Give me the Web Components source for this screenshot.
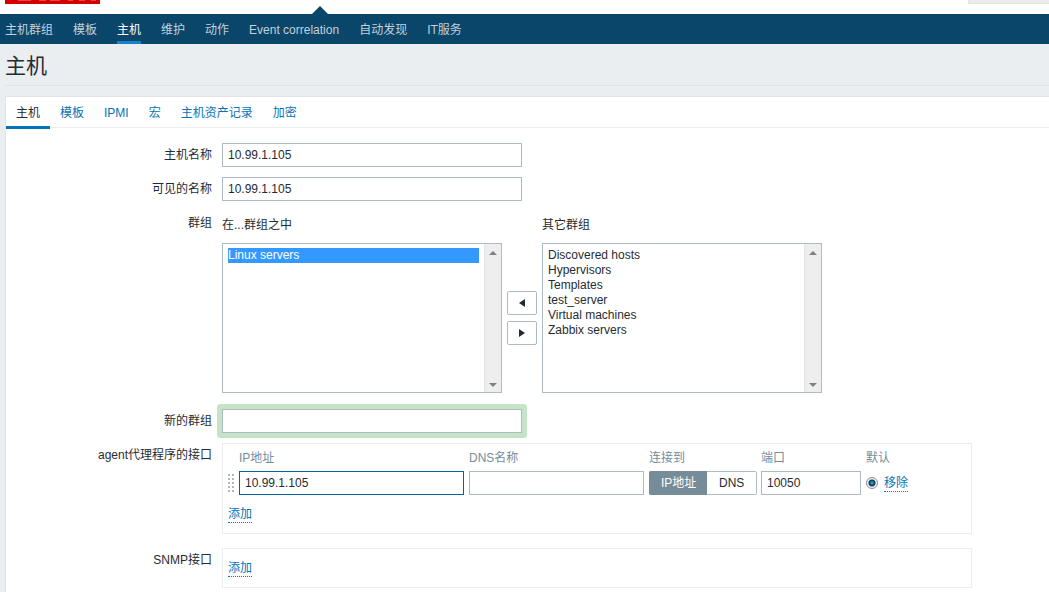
<!DOCTYPE html>
<html lang="zh-CN">
<head>
<meta charset="utf-8">
<title>主机</title>
<style>
  html { background: #ebeef0; }
  body {
    margin: 0;
    font: 12px/16px "Liberation Sans", "Noto Sans CJK SC", Arial, sans-serif;
    color: #1f2c33;
  }
</style>
</head>
<body>
<zbx-app></zbx-app>

<script>
const define = (name, html, setup) => {
  const tpl = document.createElement('template');
  tpl.innerHTML = html;
  customElements.define(name, class extends HTMLElement {
    /* Lets a <label for> outside the shadow root point at the element. */
    static formAssociated = true;
    constructor() {
      super();
      const delegatesFocus = name === 'zbx-textbox';
      this.attachShadow({ mode: 'open', delegatesFocus }).append(tpl.content.cloneNode(true));
    }
    connectedCallback() { if (setup) setup(this, this.shadowRoot); }
  });
};

define('zbx-topbar', `
  <style>
    :host { display: flex; justify-content: space-between; height: 14px; padding-left: 5px; background: #fff; position: relative; }
    .logo { display: block; width: 95px; height: 4px; }
    .search { width: 80px; height: 3px; background: #ebebeb; border: solid #dfe4e7; border-width: 0 0 1px 1px; }
    .pointer { position: absolute; left: 312px; bottom: 0; width: 16px; height: 8px; }
  </style>
  <svg class="logo" viewBox="0 0 95 4" aria-hidden="true">
    <rect width="95" height="4" fill="#d40000"/>
    <path d="M13 .5h13M34 .5h7M45 .5h10M63 .5h5M74 .5h6M86 .5h5" stroke="#dd4a4a" fill="none"/>
  </svg>
  <div class="search"></div>
  <svg class="pointer" viewBox="0 0 16 8" aria-hidden="true"><path d="M0 8L8 0l8 8z" fill="#0a466a"/></svg>
`);

define('zbx-nav', `
  <style>
    :host { display: block; background: #0a466a; }
    nav { display: flex; gap: 20px; padding-left: 5px; }
    ::slotted(a) { box-sizing: border-box; height: 30px; line-height: 16px; padding-top: 8px; color: #c2d1da; text-decoration: none; white-space: nowrap; }
    ::slotted(a[aria-current]) { color: #fff; border-bottom: 3px solid #1483cb; }
  </style>
  <nav><slot></slot></nav>
`);

define('zbx-title', `
  <style>
    :host { display: block; margin-left: 5px; border-bottom: 1px solid #dfe4e7; }
    h1 { margin: 0; padding: 8px 0 5px; font-size: 21px; line-height: 28px; font-weight: 400; }
  </style>
  <h1><slot></slot></h1>
`);

define('zbx-tabs', `
  <style>
    :host { display: flex; height: 30px; border-bottom: 1px solid #ebeef0; }
    ::slotted(a) { box-sizing: border-box; height: 32px; padding: 8px 10px 0; color: #0275b8; text-decoration: none; white-space: nowrap; }
    ::slotted(a[aria-current]) { color: #1f2c33; border-bottom: 3px solid #0275b8; }
  </style>
  <slot></slot>
`);

/* A form row: label on the left, slotted field on the right. */
define('zbx-row', `
  <style>
    :host { display: grid; grid-template-columns: 206px minmax(0, 1fr); column-gap: 10px; }
    .label { padding-top: 4px; text-align: right; }
  </style>
  <div class="label"><slot name="label"></slot></div>
  <div><slot></slot></div>
`);

define('zbx-textbox', `
  <style>
    :host { display: block; width: 300px; max-width: 100%; }
    :host([highlight]) { box-shadow: 0 0 0 5px #c5e3c7; border-radius: 1px; }
    :host([fill]) { width: auto; }
    input { display: block; box-sizing: border-box; width: 100%; height: 24px; margin: 0; padding: 0 5px; border: 1px solid #acbbc2; border-radius: 0; background: #fff; font: inherit; color: inherit; outline: none; }
    :host([active]) input { border-color: #0064a0; }
  </style>
  <input type="text">
`, (el, root) => {
  const input = root.querySelector('input');
  input.value = el.getAttribute('value') || '';
  input.setAttribute('aria-label', el.getAttribute('label') || '');
});

/* List box with a scroll rail; options are given as a "|" separated list. */
define('zbx-listbox', `
  <style>
    :host { display: block; width: 280px; }
    .title { display: block; line-height: 16px; margin-bottom: 10px; }
    .box { display: flex; box-sizing: border-box; height: 150px; border: 1px solid #acbbc2; background: #fff; }
    select { flex: 1; min-width: 0; height: 148px; margin: 0; padding: 4px 5px; border: 0; border-radius: 0; background: #fff; font: inherit; color: inherit; outline: none; overflow: hidden; scrollbar-width: none; }
    option { min-height: 0; padding: 0; line-height: 15px; height: 15px; color: #1f2c33; }
    option:checked { background: #3399ff linear-gradient(#3399ff, #3399ff); color: #fff; }
    .rail { display: flex; flex-direction: column; justify-content: space-between; align-items: center; width: 17px; padding: 7px 0 5px; box-sizing: border-box; background: #eee; border-left: 1px solid #e3e3e3; }
    svg { display: block; width: 8px; height: 4px; }
  </style>
  <label class="title" for="list"></label>
  <div class="box">
    <select id="list" multiple></select>
    <div class="rail" aria-hidden="true">
      <svg viewBox="0 0 8 4"><path d="M0 4L4 0l4 4z" fill="#808080"/></svg>
      <svg viewBox="0 0 8 4"><path d="M0 0h8L4 4z" fill="#808080"/></svg>
    </div>
  </div>
`, (el, root) => {
  root.querySelector('.title').textContent = el.getAttribute('label');
  const select = root.querySelector('select');
  for (const text of el.getAttribute('options').split('|')) {
    select.add(new Option(text, text, false, text === el.getAttribute('selected')));
  }
});

define('zbx-groups', `
  <style>
    :host { display: flex; gap: 5px; padding-top: 6px; }
    .move { display: flex; flex-direction: column; gap: 6px; padding-top: 74px; }
    button { display: flex; align-items: center; justify-content: center; width: 30px; height: 24px; padding: 0; background: #fff; border: 1px solid #acbbc2; border-radius: 2px; }
    svg { width: 6px; height: 8px; fill: #1f2c33; }
  </style>
  <zbx-listbox label="在...群组之中" options="Linux servers" selected="Linux servers"></zbx-listbox>
  <div class="move">
    <button type="button" aria-label="Add"><svg viewBox="0 0 6 8"><path d="M6 0v8L0 4z"/></svg></button>
    <button type="button" aria-label="Remove"><svg viewBox="0 0 6 8"><path d="M0 0v8l6-4z"/></svg></button>
  </div>
  <zbx-listbox label="其它群组" options="Discovered hosts|Hypervisors|Templates|test_server|Virtual machines|Zabbix servers"></zbx-listbox>
`);

define('zbx-link', `
  <style>
    :host { display: inline-block; }
    a { display: block; line-height: 16px; color: #0275b8; text-decoration: none; border-bottom: 1px dotted #0275b8; }
  </style>
  <a href="#"><slot></slot></a>
`);

define('zbx-panel', `
  <style>
    :host { display: block; box-sizing: border-box; width: 750px; max-width: 100%; padding: 6px 5px 5px; border: 1px solid #ebeef0; }
  </style>
  <slot></slot>
`);

define('zbx-toggle', `
  <style>
    :host { display: flex; width: 108px; }
    .ip { flex: none; }
    .dns { flex: 1; }
    input { position: absolute; opacity: 0; margin: 0; pointer-events: none; }
    span { display: block; box-sizing: border-box; height: 24px; line-height: 22px; text-align: center; background: #fff; border: 1px solid #acbbc2; white-space: nowrap; }
    .ip span { border-right: 0; border-radius: 2px 0 0 2px; padding: 0 11px; }
    .dns span { border-left: 0; border-radius: 0 2px 2px 0; }
    input:checked + span { background: #768d99; border-color: #768d99; color: #fff; }
  </style>
  <label class="ip"><input type="radio" name="useip" checked><span>IP地址</span></label>
  <label class="dns"><input type="radio" name="useip"><span>DNS</span></label>
`);

define('zbx-interfaces', `
  <style>
    :host { display: block; }
    table { width: 686px; border-collapse: collapse; table-layout: fixed; }
    th { padding: 0 5px 5px 0; text-align: left; font-weight: 400; line-height: 16px; color: #768d99; }
    td { padding: 0 5px 0 0; height: 24px; }
    .drag { width: 11px; }
    .ip { width: 230px; }
    .dns { width: 180px; }
    .use { width: 112px; }
    .port { width: 105px; }
    .use-cell { padding-right: 4px; }
    .handle { display: block; width: 6px; height: 18px; }
    .default { display: flex; align-items: center; gap: 6px; white-space: nowrap; }
    .default input { appearance: none; box-sizing: border-box; width: 12px; height: 12px; margin: 0; border: 1px solid #8e8f8f; border-radius: 50%; background: radial-gradient(circle at 5px 5px, #6cc8ee 0, #1784b8 1px, #0b3551 3px, #0b3551 3px, #f0f0f0 4px); }
  </style>
  <table>
    <colgroup><col class="drag"><col class="ip"><col class="dns"><col class="use"><col class="port"><col></colgroup>
    <thead>
      <tr><th></th><th>IP地址</th><th>DNS名称</th><th>连接到</th><th>端口</th><th>默认</th></tr>
    </thead>
    <tbody>
      <tr>
        <td><svg class="handle" viewBox="0 0 6 18" aria-hidden="true"><path d="M0 1h2M4 1h2M0 5h2M4 5h2M0 9h2M4 9h2M0 13h2M4 13h2M0 17h2M4 17h2" stroke="#acbbc2" stroke-width="2"/></svg></td>
        <td><zbx-textbox fill active label="IP地址" value="10.99.1.105"></zbx-textbox></td>
        <td><zbx-textbox fill label="DNS名称"></zbx-textbox></td>
        <td class="use-cell"><zbx-toggle></zbx-toggle></td>
        <td><zbx-textbox fill label="端口" value="10050"></zbx-textbox></td>
        <td><div class="default"><input type="radio" name="main" checked aria-label="默认"><zbx-link>移除</zbx-link></div></td>
      </tr>
    </tbody>
  </table>
`);

define('zbx-form', `
  <style>
    form { display: flex; flex-direction: column; gap: 10px; padding: 15px 0 4px; }
    .list { margin-bottom: 6px; }
    .agent-add { margin: 11px 0 5px; }
    .snmp { margin-top: 4px; }
    .snmp-add { margin: 5px 0; }
    zbx-link { vertical-align: top; }
  </style>
  <form>
    <zbx-row><label slot="label" for="host">主机名称</label><zbx-textbox id="host" label="主机名称" value="10.99.1.105"></zbx-textbox></zbx-row>
    <zbx-row><label slot="label" for="visible">可见的名称</label><zbx-textbox id="visible" label="可见的名称" value="10.99.1.105"></zbx-textbox></zbx-row>
    <zbx-row class="list"><span slot="label">群组</span><zbx-groups></zbx-groups></zbx-row>
    <zbx-row><label slot="label" for="newgroup">新的群组</label><zbx-textbox id="newgroup" highlight label="新的群组"></zbx-textbox></zbx-row>
    <zbx-row><span slot="label">agent代理程序的接口</span>
      <zbx-panel><zbx-interfaces></zbx-interfaces><zbx-link class="agent-add">添加</zbx-link></zbx-panel>
    </zbx-row>
    <zbx-row class="snmp"><span slot="label">SNMP接口</span>
      <zbx-panel><zbx-link class="snmp-add">添加</zbx-link></zbx-panel>
    </zbx-row>
  </form>
`);

define('zbx-app', `
  <style>
    :host { display: flex; flex-direction: column; min-height: 100vh; }
    .card { flex: 1; margin: 10px 0 0 5px; background: #fff; border: solid #dfe4e7; border-width: 1px 0 0 1px; }
  </style>
  <zbx-topbar></zbx-topbar>
  <zbx-nav>
    <a href="#">主机群组</a><a href="#">模板</a><a href="#" aria-current="page">主机</a><a href="#">维护</a><a href="#">动作</a><a href="#">Event correlation</a><a href="#">自动发现</a><a href="#">IT服务</a>
  </zbx-nav>
  <zbx-title>主机</zbx-title>
  <main class="card">
    <zbx-tabs>
      <a href="#" aria-current="true">主机</a><a href="#">模板</a><a href="#">IPMI</a><a href="#">宏</a><a href="#">主机资产记录</a><a href="#">加密</a>
    </zbx-tabs>
    <zbx-form></zbx-form>
  </main>
`);
</script>
</body>
</html>
